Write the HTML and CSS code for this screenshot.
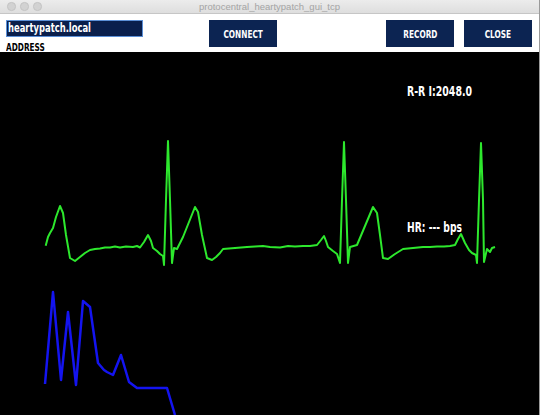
FILE: index.html
```html
<!DOCTYPE html>
<html>
<head>
<meta charset="utf-8">
<link rel="stylesheet" href="styles.css">
</head>
<body>
<div class="window">
  <div class="titlebar">
    <div class="lights"><span class="light"></span><span class="light"></span><span class="light"></span></div>
    <div class="title">protocentral_heartypatch_gui_tcp</div>
  </div>
  <div class="toolbar">
    <div class="address">
      <div class="input"><span class="squeeze">heartypatch.local</span></div>
      <div class="label"><span class="squeeze">ADDRESS</span></div>
    </div>
    <div class="btn connect"><span class="squeeze mid">CONNECT</span></div>
    <div class="spacer"></div>
    <div class="btn"><span class="squeeze mid">RECORD</span></div>
    <div class="btn"><span class="squeeze mid">CLOSE</span></div>
  </div>
  <div class="canvas">
    <svg class="plot" width="540" height="363" viewBox="0 52 540 363">
      <polyline class="ecg" points="45.7,245.7 48,237 50,233 53,228 56,217 60,206 63,213 66,235 70,258 75,261 80,257 85,253 90,250 95,249 100,248.5 105,247.5 110,247.5 115,246.5 120,247.5 126,246.5 133,247 137,246 140,247.5 144,242 148,235 151,241 153,248 157,251 160,254 163,256 164,265 166,200 168,141 170,200 172,263 174,248 177,249 180,243 183,237 189,222 195,207 198,212 202,235 207,258 212,260 216,257 220,253 223,249 229,248.5 235,248 241,247.5 247,247 255,246.5 263,246 270,247 280,247.5 288,246 295,246.5 303,246 310,246 317,245 321,240 324,236 326,241 328,247 333,251 337,254 340,263 342,200 344,142 346,200 348,263 350,247 357,245 365,226 373,207 377,213 380,235 383,258 388,259 395,254 403,249 408,248.5 413,248 418,247.5 423,247 430,247 437,246.5 444,246.5 450,246 455,245 458,239 461,234 465,243 469,250 472,253 476,255 477,263 479,200 481,143 483,200 484,262 487,249 490,252 492,248 495,247"/>
      <polyline class="spec" points="45,384 53,292 61,380 68,312 76,385 83,301 90,307 98,363 104,370 107,372 113,375 121,355 129,382 137,388 167,388 175,415"/>
      <text class="readout" x="407" y="96" textLength="65" lengthAdjust="spacingAndGlyphs">R-R I:2048.0</text>
      <text class="readout" x="407" y="232" textLength="55" lengthAdjust="spacingAndGlyphs">HR: --- bps</text>
    </svg>
  </div>
</div>
</body>
</html>
```
FILE: styles.css
```css
html, body {
  margin: 0;
  padding: 0;
  width: 540px;
  height: 415px;
  overflow: hidden;
  background: #000;
}
.window {
  width: 540px;
  height: 415px;
  display: flex;
  flex-direction: column;
  background: #fff;
  box-sizing: border-box;
  border-right: 1px solid #9a9a9a;
}
.titlebar {
  height: 13px;
  flex: none;
  background: linear-gradient(#ececec, #dedede);
  border-bottom: 1px solid #c6c6c6;
  position: relative;
  display: flex;
  align-items: center;
}
.lights {
  display: flex;
  gap: 4.5px;
  padding-left: 7px;
}
.light {
  width: 8.5px;
  height: 8.5px;
  border-radius: 50%;
  background: #d2d2d2;
  border: 0.5px solid #c4c4c4;
  box-sizing: border-box;
}
.title {
  position: absolute;
  left: 0;
  right: 0;
  top: 0;
  line-height: 13px;
  text-align: center;
  font-family: "Liberation Sans", Arial, sans-serif;
  font-size: 9.5px;
  color: #a4a4a4;
}
.toolbar {
  height: 38px;
  flex: none;
  display: flex;
  align-items: flex-start;
  padding: 6px 7px 0 6px;
  box-sizing: border-box;
  background: #fff;
  font-family: "DejaVu Sans", sans-serif;
  font-weight: bold;
}
.squeeze {
  display: inline-block;
  white-space: nowrap;
  transform: scaleX(0.7);
  transform-origin: left center;
}
.squeeze.mid {
  transform-origin: center center;
}
.address {
  width: 137px;
  display: flex;
  flex-direction: column;
}
.input {
  height: 17px;
  box-sizing: border-box;
  border: 1px solid #5b8fd6;
  background: #0a1f4c;
  color: #fff;
  font-size: 12px;
  line-height: 15px;
  padding-left: 1px;
  overflow: hidden;
}
.label {
  margin-top: 5px;
  font-size: 10.5px;
  line-height: 10px;
  color: #000;
}
.btn {
  width: 68px;
  height: 27px;
  background: #0c2452;
  color: #fff;
  font-size: 10.5px;
  display: flex;
  align-items: center;
  justify-content: center;
}
.connect {
  margin-left: 66px;
}
.spacer {
  flex: 1;
}
.btn + .btn {
  margin-left: 10px;
}
.canvas {
  flex: 1;
  background: #000;
  position: relative;
  overflow: hidden;
}
.plot {
  display: block;
}
.ecg {
  fill: none;
  stroke: #2de82d;
  stroke-width: 2;
  stroke-linejoin: round;
}
.spec {
  fill: none;
  stroke: #1414f0;
  stroke-width: 2.5;
  stroke-linejoin: round;
}
.readout {
  fill: #fff;
  font-family: "DejaVu Sans", sans-serif;
  font-weight: bold;
  font-size: 14px;
}
```
